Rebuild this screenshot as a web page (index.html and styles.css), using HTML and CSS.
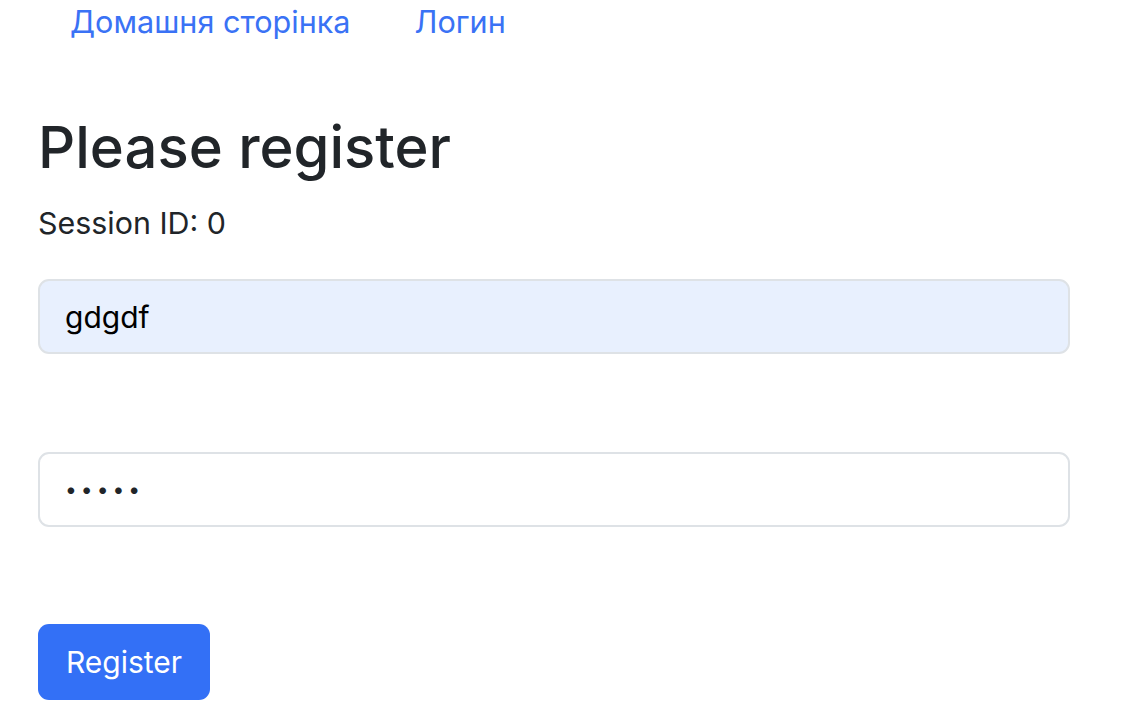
FILE: index.html
```html
<!DOCTYPE html>
<html lang="uk">
<head>
<meta charset="utf-8">
<title>Please register</title>
<link rel="stylesheet" href="styles.css">
</head>
<body>
<nav class="nav">
  <a class="nav-link" href="#">Домашня сторінка</a>
  <a class="nav-link" href="#">Логин</a>
</nav>
<main class="container">
  <h1 class="title">Please register</h1>
  <p class="session">Session ID: 0</p>
  <form class="form">
    <div class="field">
      <input class="input input-autofill" type="text" value="gdgdf">
    </div>
    <div class="field">
      <input class="input input-password" type="password" value="12345">
    </div>
    <button class="btn" type="button">Register</button>
  </form>
</main>
</body>
</html>
```
FILE: styles.css
```css
* { box-sizing: border-box; }
body {
  margin: 0;
  font-family: Inter, "Noto Sans", sans-serif;
  color: #212529;
  background: #fff;
}
.nav {
  display: flex;
  padding: 0 0 0 38px;
  height: 44px;
  align-items: center;
}
.nav-link {
  color: #3a72f5;
  text-decoration: none;
  font-size: 30.6px;
  padding: 0 32px;
  line-height: 42px;
}
.container {
  padding: 0 62px 0 38px;
}
.title {
  font-size: 58px;
  font-weight: 500;
  margin: 67px 0 0;
  line-height: 72px;
}
.session {
  font-size: 30.4px;
  margin: 20px 0 0;
  line-height: 40px;
}
.form {
  display: flex;
  flex-direction: column;
  align-items: flex-start;
  margin-top: 36px;
}
.field {
  width: 100%;
  margin-bottom: 98px;
}
.field + .field { margin-bottom: 97px; }
.input {
  display: block;
  width: 100%;
  height: 75px;
  border: 2px solid #dee2e6;
  border-radius: 11px;
  padding: 0 25px;
  font-family: inherit;
  font-size: 30px;
  color: #000;
  background: #fff;
  outline: none;
}
.input-autofill { background: #e8f0fe; }
.input-password {
  font-size: 21px;
  letter-spacing: 4px;
  color: #212529;
  padding-left: 25px;
}
.btn {
  background: #3370f6;
  color: #fff;
  border: none;
  border-radius: 11px;
  height: 76px;
  width: 172px;
  font-family: inherit;
  font-size: 30px;
  padding: 0;
  cursor: pointer;
}
```
